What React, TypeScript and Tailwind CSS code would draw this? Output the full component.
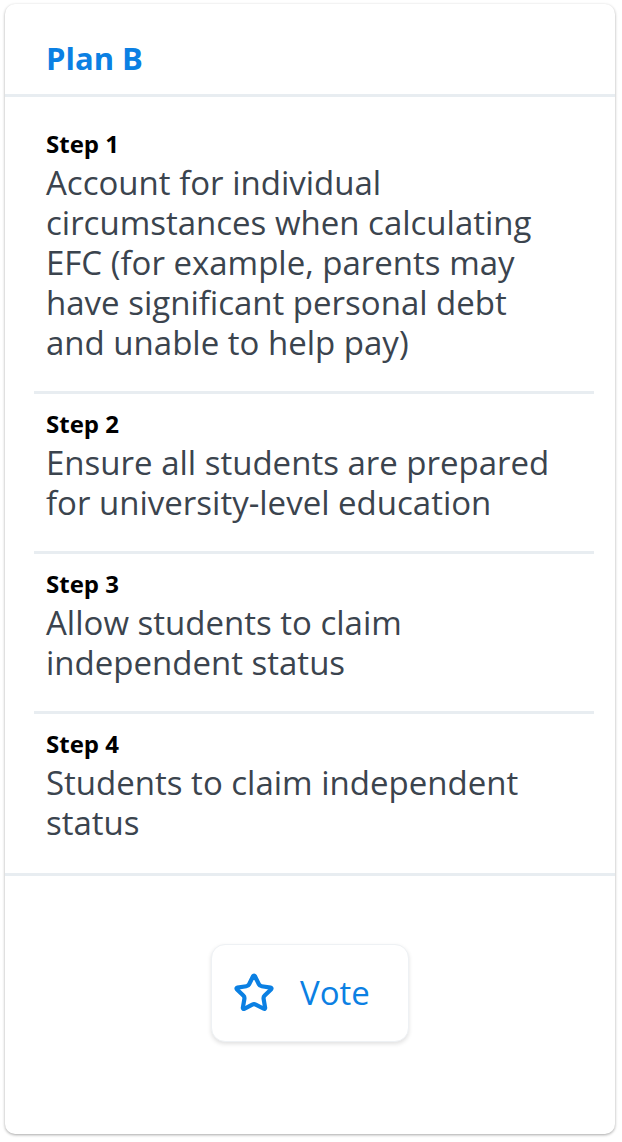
import React from "react";
import { Star } from "lucide-react";

const steps = [
  {
    label: "Step 1",
    text: "Account for individual circumstances when calculating EFC (for example, parents may have significant personal debt and unable to help pay)",
  },
  { label: "Step 2", text: "Ensure all students are prepared for university-level education" },
  { label: "Step 3", text: "Allow students to claim independent status" },
  { label: "Step 4", text: "Students to claim independent status" },
];

export default function App() {
  return (
    <div
      className="min-h-[1142px] bg-white pt-[4px] px-[5px]"
      style={{ fontFamily: '"Open Sans", "Noto Sans", sans-serif' }}
    >
      <div className="w-[610px] h-[1130px] bg-white rounded-[10px] shadow-[0_1px_3px_rgba(0,0,0,0.35)] flex flex-col">
        <div className="pt-[34px] pb-[16px] pl-[41px] border-b-[3px] border-[#e8edf1]">
          <h1 className="text-[31px] leading-[40px] font-bold text-[#0b80e3]">Plan B</h1>
        </div>
        <div className="pt-[17px] pl-[29px] pr-[21px] border-b-[3px] border-[#e8edf1]">
          {steps.map((s, i) => (
            <div
              key={s.label}
              className={
                "pl-[12px] pr-[20px] pt-[16px] " +
                (i < steps.length - 1 ? "pb-[28px] border-b-[3px] border-[#e8edf1]" : "pb-[30px]")
              }
            >
              <div className="text-[24px] leading-[28px] font-bold text-black mb-[5px]">{s.label}</div>
              <p className="text-[33px] leading-[40px] text-[#3b444e]">{s.text}</p>
            </div>
          ))}
        </div>
        <div className="flex justify-center pt-[68px]">
          <button className="w-[198px] h-[98px] rounded-[14px] bg-white border border-[#eef1f4] shadow-[0_2px_4px_rgba(0,0,0,0.12)] flex items-center pl-[21px]">
            <Star size={42} strokeWidth={2.4} className="text-[#0b80e3]" />
            <span className="ml-[25px] text-[33px] leading-[40px] text-[#0b80e3]">Vote</span>
          </button>
        </div>
      </div>
    </div>
  );
}
